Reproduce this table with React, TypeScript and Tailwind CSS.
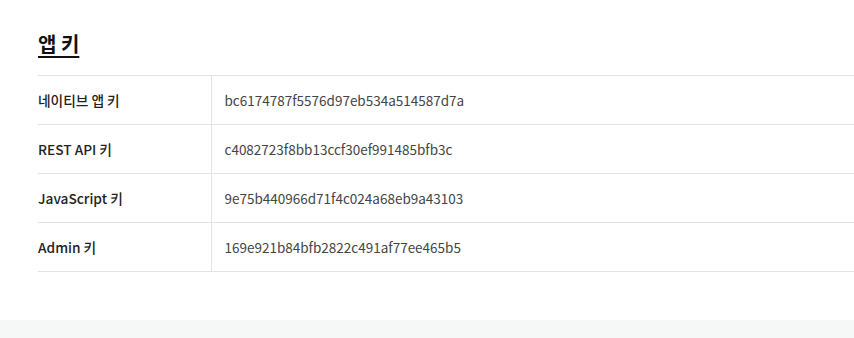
const keys = [
  { label: "네이티브 앱 키", value: "bc6174787f5576d97eb534a514587d7a" },
  { label: "REST API 키", value: "c4082723f8bb13ccf30ef991485bfb3c" },
  { label: "JavaScript 키", value: "9e75b440966d71f4c024a68eb9a43103" },
  { label: "Admin 키", value: "169e921b84bfb2822c491af77ee465b5" },
];

export default function App() {
  return (
    <div
      className="min-h-[338px] w-full bg-white"
      style={{ fontFamily: '"Noto Sans CJK KR", "Noto Sans", sans-serif' }}
    >
      <section className="pl-[38px] pt-[29px] pb-[48px]">
        <h2 className="text-[20px] font-bold leading-[30px] text-[#111] underline underline-offset-[4px] decoration-[2px]">
          앱 키
        </h2>
        <table className="mt-[16px] w-full border-collapse border-t border-[#e3e3e3]">
          <tbody>
            {keys.map((k) => (
              <tr key={k.label} className="h-[49px] border-b border-[#e3e3e3]">
                <td className="w-[173px] border-r border-[#e3e3e3] text-[13.7px] font-medium text-[#222]">
                  {k.label}
                </td>
                <td className="pl-[13px] text-[13.5px] text-[#444]">{k.value}</td>
              </tr>
            ))}
          </tbody>
        </table>
      </section>
      <div className="h-[18px] bg-[#f6f8f7]" />
    </div>
  );
}
